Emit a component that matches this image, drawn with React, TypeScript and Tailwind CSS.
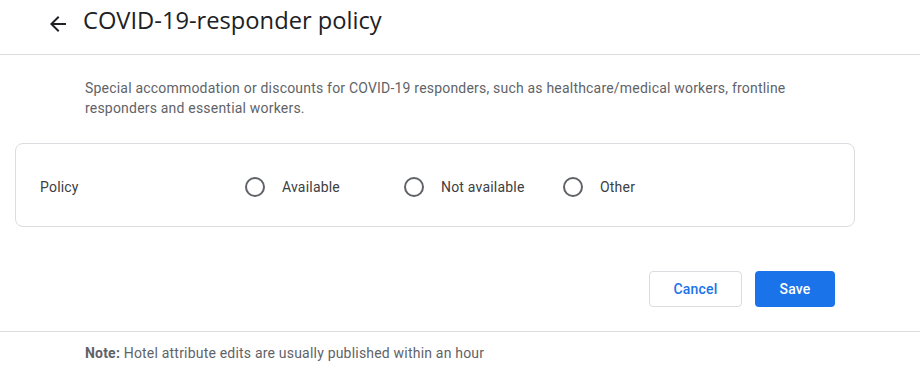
import React from "react";

const Radio = ({ label }: { label: string }) => (
  <label className="flex items-center w-[159px] cursor-pointer">
    <span className="w-[20px] h-[20px] rounded-full border-2 border-[#5f6368] box-border" />
    <span className="ml-[17px] text-[14px] tracking-[0.2px] text-[#3c4043]">{label}</span>
  </label>
);

export default function App() {
  return (
    <div className="w-[920px] h-[371px] bg-white overflow-hidden" style={{ fontFamily: "Roboto, 'Liberation Sans', sans-serif" }}>
      <div className="h-[55px] border-b border-[#dadce0] flex items-start pt-[5px] pl-[46px]">
        <svg width="24" height="24" viewBox="0 0 24 24" className="mt-[7px]" fill="#202124">
          <path d="M20 11H7.83l5.59-5.59L12 4l-8 8 8 8 1.41-1.41L7.83 13H20v-2z" />
        </svg>
        <h1 className="ml-[13px] text-[23.7px] leading-[30px] text-[#202124] font-normal" style={{ fontFamily: "'Open Sans', 'Liberation Sans', sans-serif" }}>
          COVID-19-responder policy
        </h1>
      </div>
      <div className="pt-[23px]">
        <p className="pl-[85px] pr-[100px] text-[14px] leading-[20px] tracking-[0.2px] text-[#5f6368]">
          Special accommodation or discounts for COVID-19 responders, such as healthcare/medical workers, frontline responders and essential workers.
        </p>
        <div className="ml-[15px] mt-[25px] w-[840px] h-[84px] border border-[#dadce0] rounded-[8px] flex items-center pl-[24px] pt-[4px]">
          <span className="w-[205px] text-[14px] tracking-[0.2px] text-[#3c4043]">Policy</span>
          <Radio label="Available" />
          <Radio label="Not available" />
          <Radio label="Other" />
        </div>
        <div className="flex justify-end gap-[13px] pr-[85px] mt-[44px]">
          <button className="w-[93px] h-[36px] border border-[#dadce0] rounded-[4px] text-[14px] font-medium tracking-[0.2px] text-[#1a73e8] bg-white">
            Cancel
          </button>
          <button className="w-[80px] h-[36px] rounded-[4px] text-[14px] font-medium tracking-[0.2px] text-white bg-[#1a73e8]">
            Save
          </button>
        </div>
        <div className="mt-[24px] border-t border-[#dadce0] pt-[11px] pl-[85px] text-[14px] leading-[20px] tracking-[0.2px] text-[#5f6368]">
          <b className="font-bold">Note:</b> Hotel attribute edits are usually published within an hour
        </div>
      </div>
    </div>
  );
}
